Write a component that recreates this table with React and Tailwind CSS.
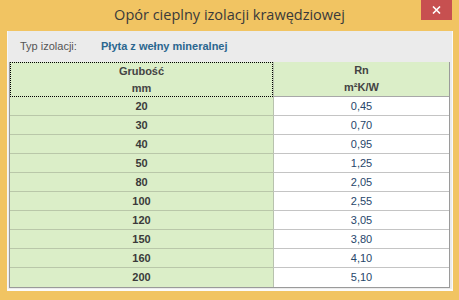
import React from 'react'

const rows = [
  ['20', '0,45'],
  ['30', '0,70'],
  ['40', '0,95'],
  ['50', '1,25'],
  ['80', '2,05'],
  ['100', '2,55'],
  ['120', '3,05'],
  ['150', '3,80'],
  ['160', '4,10'],
  ['200', '5,10'],
]

export default function App() {
  return (
    <div className="w-[459px] h-[300px] bg-[#f1c462] flex flex-col relative overflow-hidden">
      {/* title bar */}
      <div className="h-[31px] flex items-center justify-center shrink-0">
        <span className="text-[14.5px] text-[#3a3a3a] font-['Open_Sans',sans-serif] pb-[1px]">
          Opór cieplny izolacji krawędziowej
        </span>
      </div>
      <button className="absolute top-0 left-[421px] w-[31px] h-[20px] bg-[#c75050] flex items-center justify-center">
        <svg width="9" height="8" viewBox="0 0 9 8">
          <path d="M1 0.5 L8 7.5 M8 0.5 L1 7.5" stroke="#fff" strokeWidth="1.6" />
        </svg>
      </button>

      {/* client area */}
      <div className="ml-[7px] w-[446px] h-[260px] bg-[#ebebeb] border-l border-l-[#f7f7f7] border-r border-r-[#fafafa] border-b-2 border-b-[#fbfbfb] flex flex-col">
        <div className="h-[31px] flex items-center text-[11px] font-['Liberation_Sans',Arial,sans-serif] shrink-0">
          <span className="ml-[12px] w-[81px] text-[#555]">Typ izolacji:</span>
          <span className="font-bold text-[#2a668f]">Płyta z wełny mineralnej</span>
        </div>

        <div className="ml-[1px] w-[441px] border border-[#9a9a9a] border-t-0 flex flex-col font-['Liberation_Sans',Arial,sans-serif] text-[11px]">
          <div className="flex h-[35px]">
            <div className="w-[263px] bg-[#dbeec8] border border-dotted border-black flex flex-col items-center justify-center font-bold text-[#444] leading-[17px]">
              <span>Grubość</span>
              <span>mm</span>
            </div>
            <div className="flex-1 bg-[#dbeec8] border-l border-[#b8c2ae] border-b border-b-[#a8a8a8] flex flex-col items-center justify-center font-bold text-[#444] leading-[17px]">
              <span>Rn</span>
              <span>m²K/W</span>
            </div>
          </div>
          {rows.map(([g, rn], i) => (
            <div key={g} className="flex h-[19px]">
              <div className={`w-[263px] bg-[#dbeec8] flex items-center justify-center font-bold text-[#3a3a3a] ${i < rows.length - 1 ? 'border-b border-[#b9c7a9]' : ''}`}>
                {g}
              </div>
              <div className={`flex-1 bg-white border-l border-[#b8c2ae] flex items-center justify-center text-[#27466a] ${i < rows.length - 1 ? 'border-b border-b-[#c4c4c4]' : ''}`}>
                {rn}
              </div>
            </div>
          ))}
        </div>
      </div>
    </div>
  )
}
